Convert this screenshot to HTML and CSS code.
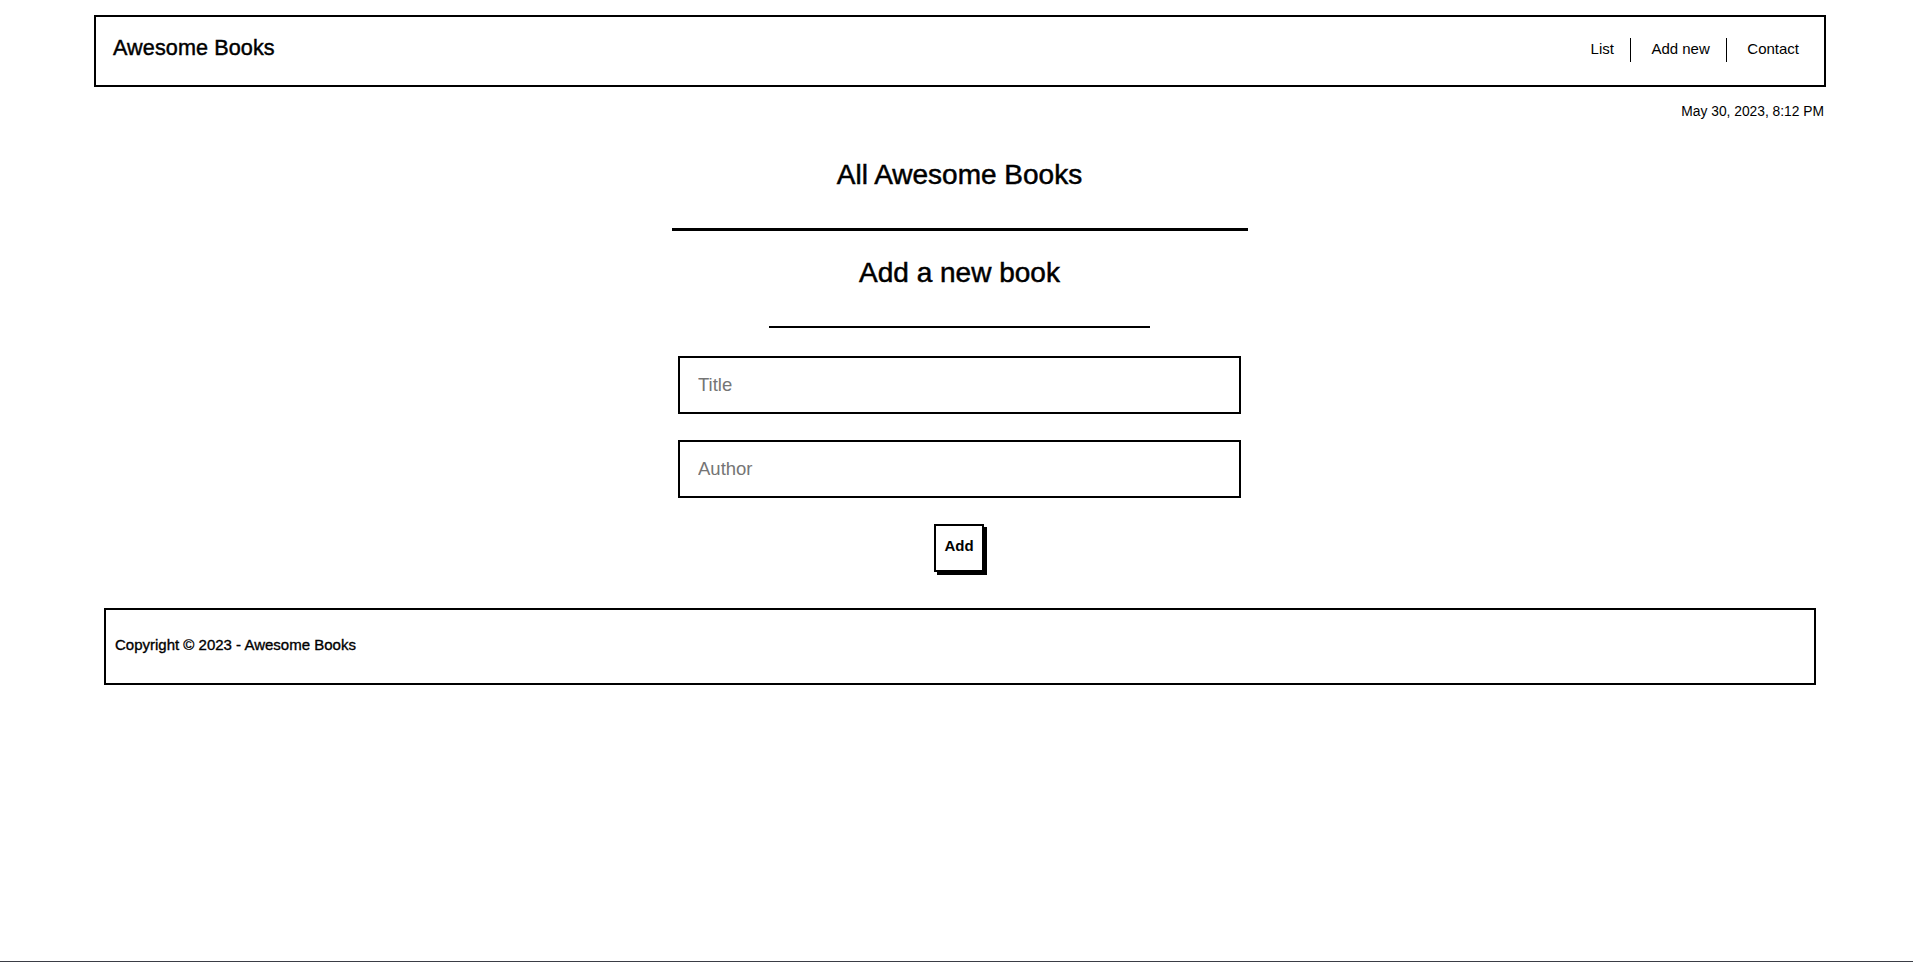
FILE: index.html
```html
<!DOCTYPE html>
<html lang="en">
<head>
<meta charset="utf-8">
<title>Awesome Books</title>
<link rel="stylesheet" href="styles.css">
</head>
<body>
<header class="topbar">
  <h1 class="brand">Awesome Books</h1>
  <nav class="menu">
    <a class="menu-link" href="#">List</a>
    <span class="menu-sep"></span>
    <a class="menu-link" href="#">Add new</a>
    <span class="menu-sep"></span>
    <a class="menu-link" href="#">Contact</a>
  </nav>
</header>
<p class="date">May 30, 2023, 8:12 PM</p>
<main class="content">
  <h2 class="heading">All Awesome Books</h2>
  <hr class="rule rule-wide">
  <h2 class="heading heading-add">Add a new book</h2>
  <hr class="rule rule-narrow">
  <form class="book-form">
    <input class="field" type="text" placeholder="Title">
    <input class="field" type="text" placeholder="Author">
    <button class="add-btn" type="button">Add</button>
  </form>
</main>
<footer class="footer">
  <p class="copy">Copyright © 2023 - Awesome Books</p>
</footer>
<div class="screen-edge"></div>
</body>
</html>
```
FILE: styles.css
```css
* { box-sizing: border-box; }
html, body { margin: 0; padding: 0; background: #fff; }
body {
  font-family: "Liberation Sans", Arial, sans-serif;
  color: #000;
}
.topbar {
  margin: 15px 87px 0 94px;
  height: 72px;
  border: 2px solid #000;
  display: flex;
  align-items: center;
  justify-content: space-between;
  padding: 0 25px 6px 17px;
}
.brand {
  margin: 0;
  font-size: 21.6px;
  font-weight: 400;
  -webkit-text-stroke: 0.45px #000;
  letter-spacing: 0.1px;
}
.menu {
  display: flex;
  align-items: center;
}
.menu-link {
  color: #000;
  text-decoration: none;
  font-size: 15px;
}
.menu-sep {
  width: 1.5px;
  height: 24px;
  margin: 4px 20px 0 16px;
  background: #000;
}
.date {
  margin: 17px 89px 0 0;
  text-align: right;
  font-size: 13.8px;
  line-height: 16px;
}
.content {
  width: 582px;
  margin: 0 auto;
  padding-left: 6px;
  display: flex;
  flex-direction: column;
  align-items: center;
}
.heading {
  width: 100%;
  text-align: center;
  margin: 39px 0 0;
  font-size: 28px;
  font-weight: 400;
  -webkit-text-stroke: 0.5px #000;
  line-height: 32px;
}
.rule {
  border: 0;
  background: #000;
  margin: 0;
}
.rule-wide {
  width: 576px;
  height: 3px;
  margin-top: 37px;
}
.heading-add {
  margin-top: 26px;
}
.rule-narrow {
  width: 381px;
  height: 2px;
  margin-top: 37px;
}
.book-form {
  width: 100%;
  display: flex;
  flex-direction: column;
  align-items: center;
}
.field {
  width: 563px;
  height: 58px;
  margin-top: 26px;
  border: 2px solid #000;
  padding: 0 0 0 18px;
  font-family: "Liberation Sans", Arial, sans-serif;
  font-size: 18.5px;
  outline: none;
}
.field:first-child { margin-top: 28px; }
.field::placeholder { color: #757575; }
.add-btn {
  margin-top: 26px;
  margin-left: -1px;
  width: 50px;
  height: 48px;
  border: 2px solid #000;
  background: #fff;
  box-shadow: 3px 3px 0 #000;
  font-family: "Liberation Sans", Arial, sans-serif;
  font-weight: 700;
  font-size: 15px;
  padding: 0 0 6px;
}
.footer {
  margin: 36px 97px 0 104px;
  height: 77px;
  border: 2px solid #000;
  display: flex;
  align-items: center;
  padding: 0 0 5px 9px;
}
.copy {
  margin: 0;
  font-size: 15px;
  font-weight: 400;
  -webkit-text-stroke: 0.35px #000;
}
.screen-edge {
  position: fixed;
  left: 0;
  right: 0;
  bottom: 0;
  height: 1px;
  background: #3a3d45;
}
```
